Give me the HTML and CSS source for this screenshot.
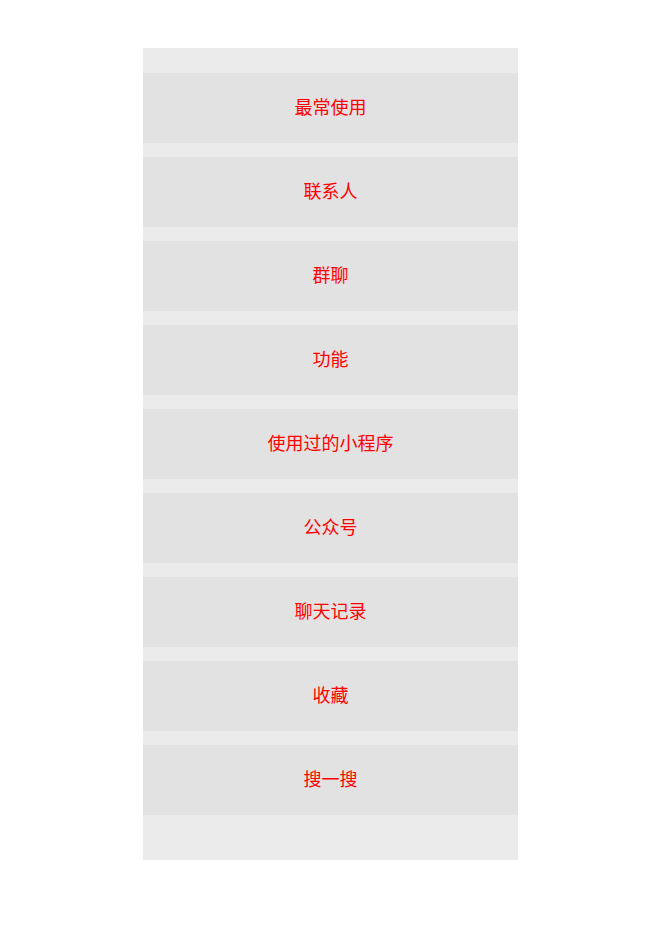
FILE: index.html
```html
<!DOCTYPE html>
<html lang="zh-CN">
<head>
<meta charset="utf-8">
<title>搜索分类</title>
<link rel="stylesheet" href="styles.css">
</head>
<body>
<div class="screen">
  <ul class="menu">
    <li class="menu-item">最常使用</li>
    <li class="menu-item">联系人</li>
    <li class="menu-item">群聊</li>
    <li class="menu-item">功能</li>
    <li class="menu-item">使用过的小程序</li>
    <li class="menu-item">公众号</li>
    <li class="menu-item">聊天记录</li>
    <li class="menu-item">收藏</li>
    <li class="menu-item">搜一搜</li>
  </ul>
</div>
</body>
</html>
```
FILE: styles.css
```css
html, body {
  margin: 0;
  padding: 0;
  background: #ffffff;
}

body {
  padding: 48px 0 0 143px;
  font-family: "Noto Sans CJK SC", "Noto Sans", sans-serif;
}

.screen {
  width: 375px;
  height: 812px;
  box-sizing: border-box;
  padding-top: 25px;
  background: #ebebeb;
}

.menu {
  list-style: none;
  margin: 0;
  padding: 0;
  display: flex;
  flex-direction: column;
  gap: 14px;
}

.menu-item {
  height: 70px;
  box-sizing: border-box;
  padding-bottom: 4px;
  display: flex;
  align-items: center;
  justify-content: center;
  background: #e3e2e2;
  color: #ff0000;
  font-size: 18px;
  line-height: 1;
}
```
